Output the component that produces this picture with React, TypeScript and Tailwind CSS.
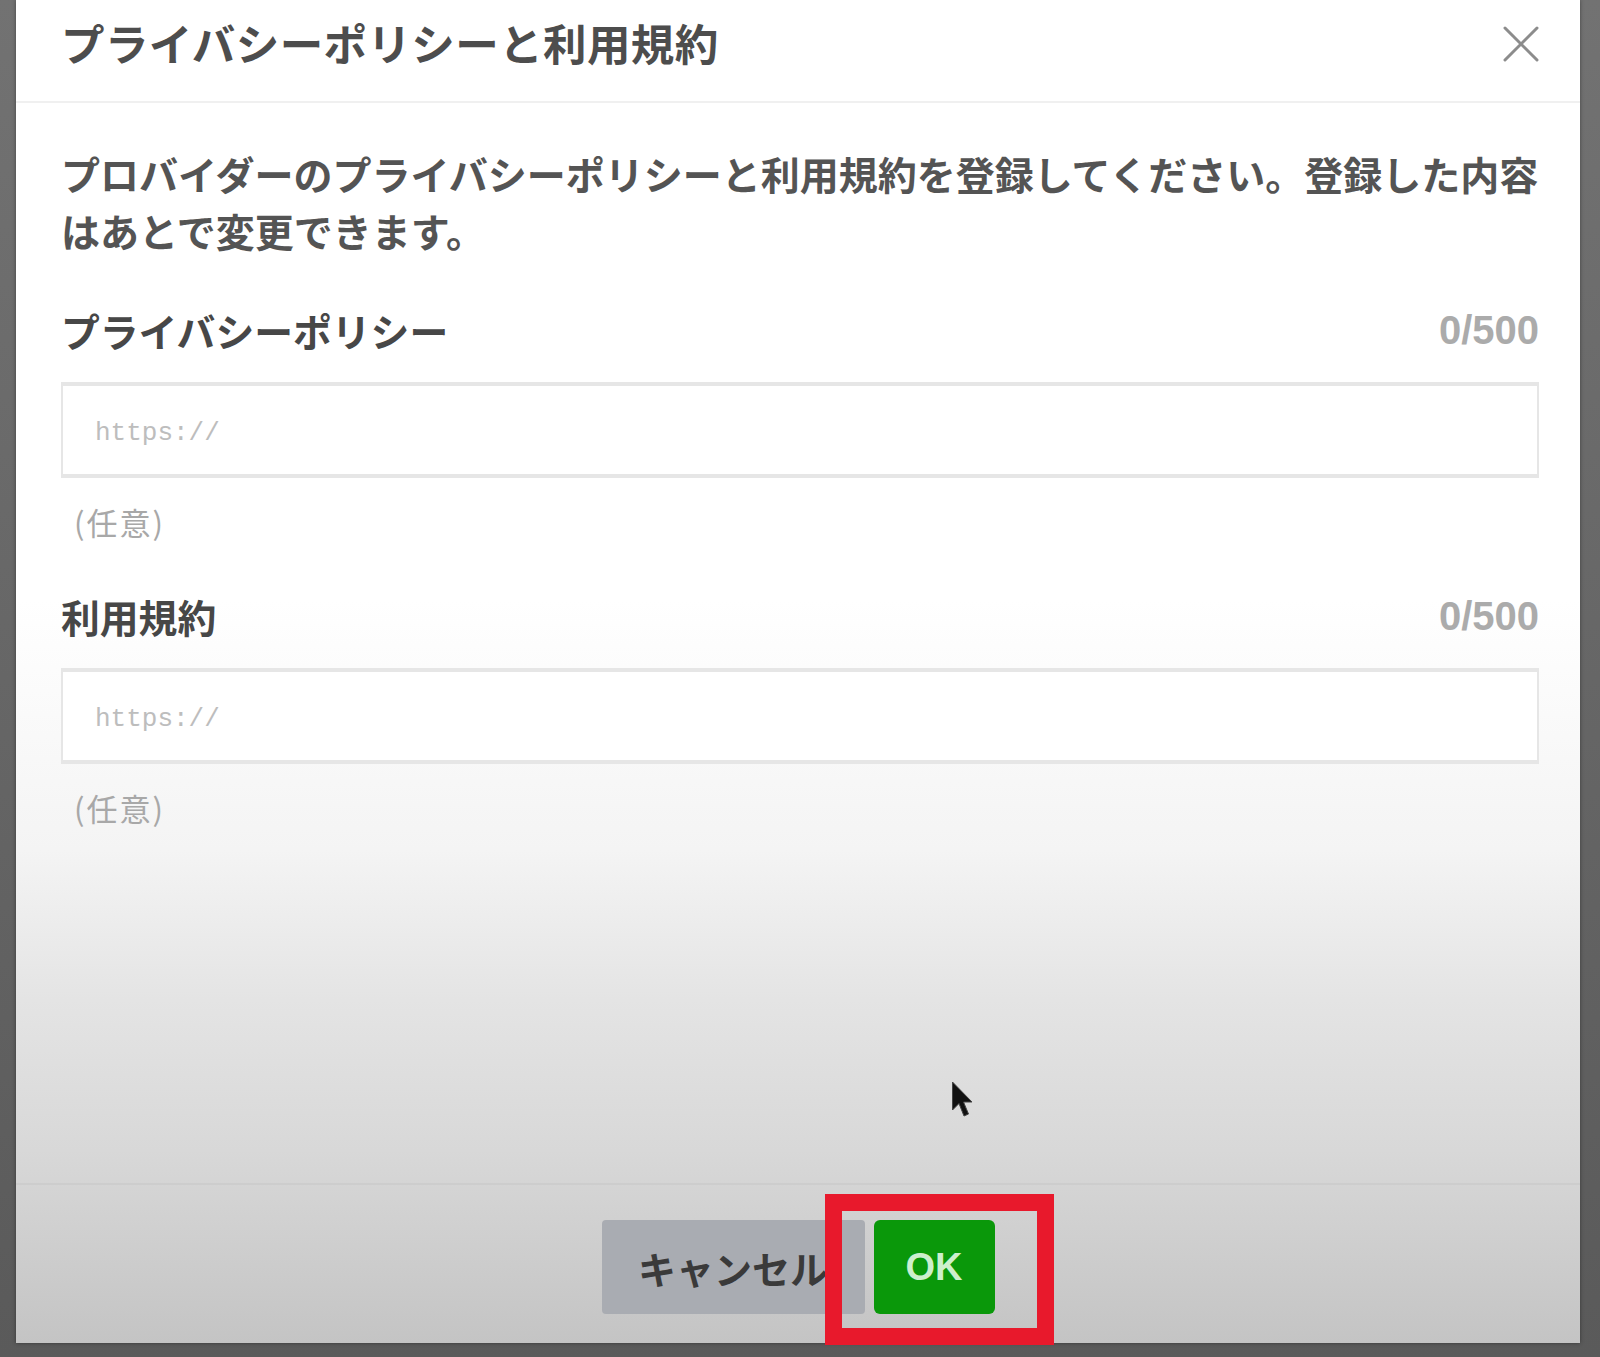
import React from "react";

const jp = { fontFamily: '"Noto Sans CJK JP", "Noto Sans", sans-serif' };

function Field({ label }: { label: string }) {
  return (
    <div className="flex flex-col">
      <div className="flex items-center justify-between">
        <span className="text-[38.8px] leading-[48px] font-bold text-[#474747]" style={jp}>
          {label}
        </span>
        <span
          className="text-[40px] leading-[48px] font-bold text-[#ababab]"
          style={{ fontFamily: '"Liberation Sans", Arial, sans-serif' }}
        >
          0/500
        </span>
      </div>
      <div className="mt-[28px] h-[96px] border-2 border-t-[4px] border-b-[4px] border-[#e6e6e6] bg-white flex items-center pl-[32px] pt-[6px]">
        <span
          className="text-[26px] text-[#bdbdbd]"
          style={{ fontFamily: '"Liberation Mono", "DejaVu Sans Mono", monospace' }}
        >
          https://
        </span>
      </div>
      <span className="mt-[24px] ml-[13px] text-[31px] tracking-[2px] leading-[40px] text-[#a8a8a8]" style={jp}>
        (任意)
      </span>
    </div>
  );
}

export default function App() {
  return (
    <div className="w-[1600px] h-[1357px] overflow-hidden bg-[linear-gradient(to_bottom,#727272,#5a5a5a)] pl-[16px] pr-[20px] pb-[14px] flex">
      <div className="relative w-[1564px] h-[1343px] flex flex-col bg-[linear-gradient(to_bottom,#ffffff_0px,#ffffff_600px,#f4f4f4_850px,#e4e4e4_1000px,#d8d8d8_1150px,#c4c4c4_100%)] shadow-[0_0_4px_rgba(0,0,0,0.4)]">
        {/* header */}
        <div className="h-[103px] border-b-2 border-[#f0f0f0] pl-[45px] pr-[41px] flex items-start justify-between">
          <h1 className="text-[43.5px] tracking-[0.4px] leading-[86px] font-bold text-[#4d4d4d]" style={jp}>
            プライバシーポリシーと利用規約
          </h1>
          <div className="h-[88px] flex items-center">
            <svg width="36" height="36" viewBox="0 0 36 36">
              <path d="M2 2 L34 34 M34 2 L2 34" stroke="#8c8c8c" strokeWidth="3" strokeLinecap="round" />
            </svg>
          </div>
        </div>

        {/* body */}
        <div className="flex-1 pl-[45px] pr-[41px] pt-[42px] flex flex-col">
          <p className="text-[39px] leading-[57px] font-bold text-[#545454]" style={jp}>
            プロバイダーのプライバシーポリシーと利用規約を登録してください。登録した内容はあとで変更できます。
          </p>
          <div className="mt-[47px]">
            <Field label="プライバシーポリシー" />
          </div>
          <div className="mt-[50px]">
            <Field label="利用規約" />
          </div>
        </div>

        {/* footer */}
        <div className="h-[160px] border-t-2 border-[#cdcdcd] pt-[35px] flex justify-center">
          <div className="relative flex gap-[9px] h-[94px]">
            <button
              className="w-[263px] h-[94px] rounded-[4px] bg-[#a9acb2] text-[38px] font-bold text-[#3a3a3a]"
              style={jp}
            >
              キャンセル
            </button>
            <button
              className="w-[121px] h-[94px] rounded-[6px] bg-[#0a980a] text-[38px] font-bold text-[#cdefcd]"
              style={{ fontFamily: '"Liberation Sans", Arial, sans-serif' }}
            >
              OK
            </button>
            <div className="absolute left-[223px] top-[-26px] w-[229px] h-[151px] border-[17px] border-[#e8192c]" />
          </div>
        </div>

        {/* mouse cursor */}
        <svg
          className="absolute left-[935px] top-[1081px]"
          width="24"
          height="40"
          viewBox="0 0 24 40"
        >
          <path
            d="M1.5 1 L1.5 29 L8 22.5 L13 35 L17.5 33 L12.5 21 L21 21 Z"
            fill="#111"
            stroke="#444"
            strokeWidth="1"
          />
        </svg>
      </div>
    </div>
  );
}
